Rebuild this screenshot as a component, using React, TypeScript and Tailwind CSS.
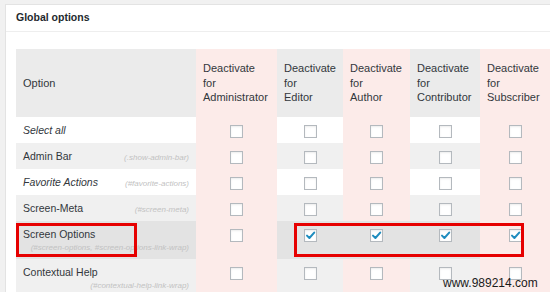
const cols = [
  { key: "option", w: "w-[180px]" },
  { key: "administrator", w: "w-[81px]" },
  { key: "editor", w: "w-[66px]" },
  { key: "author", w: "w-[67px]" },
  { key: "contributor", w: "w-[70px]" },
  { key: "subscriber", w: "w-[70px]" },
];

interface Row {
  label: string;
  hint?: string;
  italic?: boolean;
  wrap?: boolean;
  striped?: boolean;
  hover?: boolean;
  checked?: number[];
}

const rows: Row[] = [
  { label: "Select all", italic: true },
  { label: "Admin Bar", hint: "(.show-admin-bar)", striped: true },
  { label: "Favorite Actions", hint: "(#favorite-actions)", italic: true },
  { label: "Screen-Meta", hint: "(#screen-meta)", striped: true },
  {
    label: "Screen Options",
    hint: "(#screen-options, #screen-options-link-wrap)",
    wrap: true,
    hover: true,
    checked: [2, 3, 4, 5],
  },
  { label: "Contextual Help", hint: "(#contextual-help-link-wrap)", wrap: true, striped: true },
];

const roles = ["Administrator", "Editor", "Author", "Contributor", "Subscriber"];

function Checkbox({ checked }: { checked?: boolean }) {
  return (
    <span className="flex h-[13px] w-[13px] items-center justify-center border border-[#b4b9be] bg-white shadow-[inset_0_1px_2px_rgba(0,0,0,0.08)]">
      {checked && (
        <svg width="11" height="11" viewBox="0 0 11 11">
          <path d="M2 5.6 L4.4 8 L9.2 2.6" fill="none" stroke="#1e8cbe" strokeWidth="2" strokeLinecap="round" strokeLinejoin="round" />
        </svg>
      )}
    </span>
  );
}

function cellBg(row: Row, i: number) {
  if (i === 1 || i === 5) return "bg-[#fcebe9]";
  if (row.hover) return "bg-[#e3e3e3]";
  if (i === 3) return "bg-[#fcebe9]";
  return row.striped ? "bg-[#f0f0f0]" : "bg-white";
}

export default function App() {
  return (
    <div className="relative h-[292px] w-[550px] overflow-hidden bg-[#f1f1f1] pl-[5px] pt-[4px] font-['Liberation_Sans',Arial,sans-serif] text-[#32373c]">
      <div className="h-full border-l border-t border-[#e3e3e3] bg-white">
        <div className="flex h-[27px] items-center border-b border-[#eeeeee] pl-[10px] text-[10.5px] font-bold text-[#23282d]">
          Global options
        </div>
        <div className="pl-[10px] pt-[17px]">
          {/* header */}
          <div className="flex h-[68px]">
            <div className={`${cols[0].w} flex items-center bg-[#ebebeb] px-[7px] text-[11px]`}>Option</div>
            {roles.map((r, i) => (
              <div
                key={r}
                className={`${cols[i + 1].w} flex items-center px-[7px] text-[11px] leading-[14.5px] ${
                  i % 2 === 0 ? "bg-[#fcebe9]" : "bg-[#ebebeb]"
                }`}
              >
                <span>
                  Deactivate
                  <br />
                  for
                  <br />
                  {r}
                </span>
              </div>
            ))}
          </div>
          {rows.map((row) => (
            <div key={row.label} className="flex">
              <div className={`${cols[0].w} ${cellBg(row, 0)} px-[7px] pb-[5px] pt-[6px]`}>
                {row.wrap ? (
                  <div>
                    <div className="text-[10.5px] leading-[15px]">{row.label}</div>
                    <div className="text-right text-[8px] italic leading-[12px] text-[#c2c2c2]">{row.hint}</div>
                  </div>
                ) : (
                  <div className="flex items-baseline justify-between">
                    <span className={`text-[10.5px] leading-[15px] ${row.italic ? "italic" : ""}`}>{row.label}</span>
                    {row.hint && <span className="text-[8px] italic text-[#c2c2c2]">{row.hint}</span>}
                  </div>
                )}
              </div>
              {roles.map((r, i) => (
                <div key={r} className={`${cols[i + 1].w} ${cellBg(row, i + 1)} flex justify-center pt-[8px]`}>
                  <Checkbox checked={row.checked?.includes(i + 1)} />
                </div>
              ))}
            </div>
          ))}
        </div>
      </div>

      {/* annotations */}
      <div className="absolute left-[16px] top-[223px] h-[34px] w-[121px] border-[3px] border-[#e60000]" />
      <div className="absolute left-[294px] top-[223px] h-[34px] w-[230px] border-[3px] border-[#e60000]" />
      <div className="absolute left-[443px] top-[277px] text-[12px] leading-[12px] text-[#1a1a1a]">www.989214.com</div>
    </div>
  );
}
